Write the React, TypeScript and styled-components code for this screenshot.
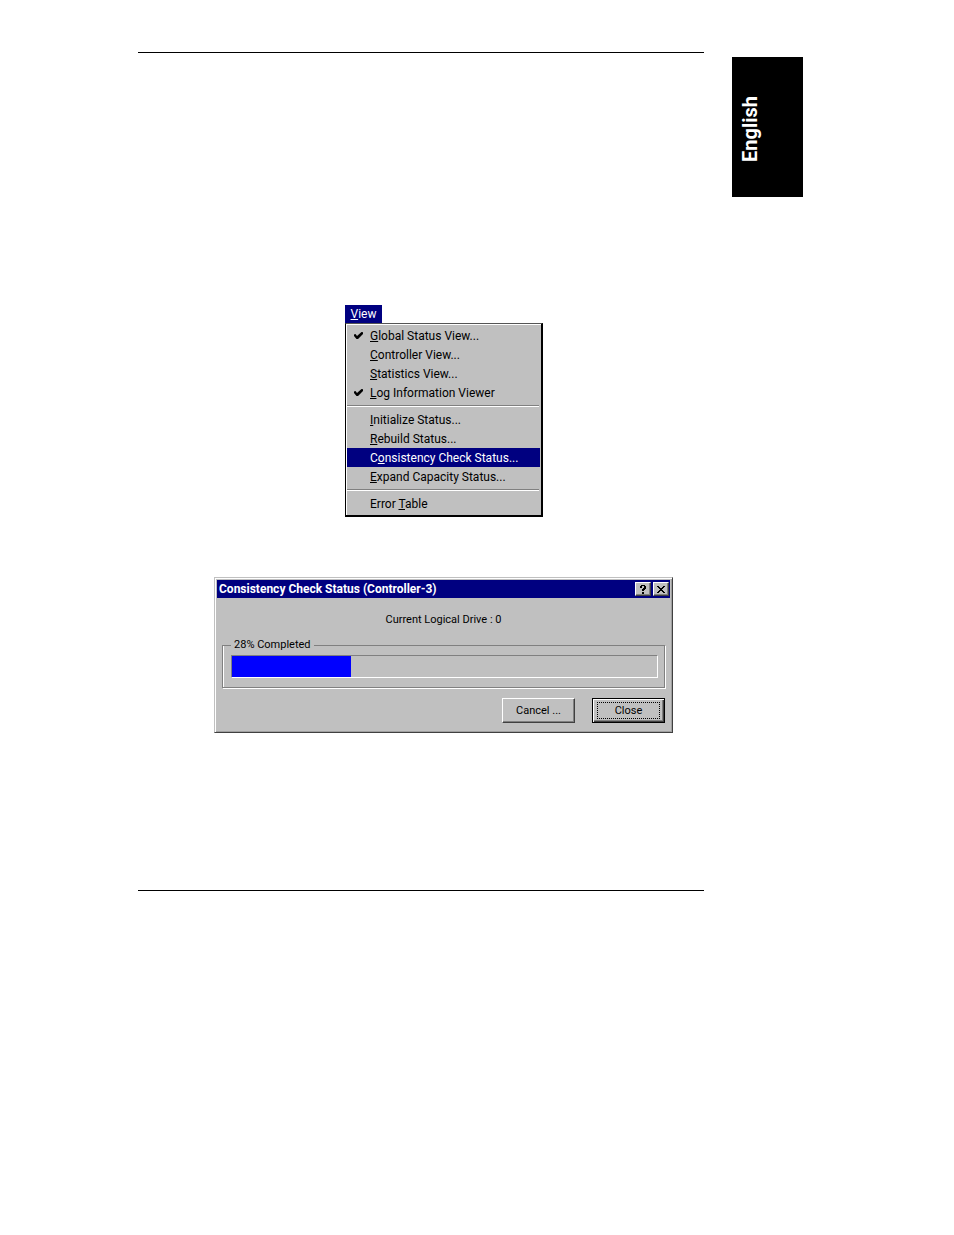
import React from "react";
import styled, { createGlobalStyle, css } from "styled-components";

const GlobalStyle = createGlobalStyle`
  *, *::before, *::after { box-sizing: border-box; }
  body { margin: 0; background: #fff; color: #000; font-family: Roboto, "Liberation Sans", Arial, sans-serif; }
  button, fieldset, legend { margin: 0; padding: 0; border: 0; font: inherit; color: inherit; }
  button { background: none; cursor: default; }
`;

const Page = styled.div`
  display: grid;
  grid-template-columns: minmax(0, 1fr) 71px;
  column-gap: 28px;
  align-items: start;
  padding: 52px 151px 64px 138px;
`;

const Sheet = styled.main`
  border-top: 1px solid #000;
  border-bottom: 1px solid #000;
  padding: 252px 0 157px 76px;
`;

const LanguageTab = styled.aside`
  display: flex;
  justify-content: center;
  align-items: flex-start;
  height: 140px;
  margin-top: 5px;
  padding: 0 6px 4px 0;
  background: #000;
  color: #fff;
  writing-mode: vertical-rl;
  transform: rotate(180deg);
  font: bold 20px/24px Roboto, "Liberation Sans", Arial, sans-serif;
`;

const MenuFigure = styled.section`
  display: flex;
  justify-content: center;
  padding-right: 30px;
`;

const DialogFigure = styled.section`
  padding: 60px 31px 0 0;
`;

const MenuBlock = styled.div`
  width: 198px;
  font-size: 12px;
  line-height: 18px;
`;

const MenuTitle = styled.button`
  display: block;
  width: 37px;
  height: 18px;
  background: #000080;
  color: #fff;
  font-size: 12px;
  text-align: center;
`;

const MenuPanel = styled.div`
  padding: 2px 1px 2px 0;
  border: solid #000;
  border-width: 1px 2px 2px 1px;
  border-top-color: #555;
  background: #c0c0c0;
  box-shadow: inset 1px 1px #fff;
`;

const MenuRow = styled.button<{ $active?: boolean }>`
  display: grid;
  grid-template-columns: 23px 1fr;
  align-items: center;
  width: calc(100% - 1px);
  height: 19px;
  margin-left: 1px;
  text-align: left;
  ${(p) => p.$active && css`background: #000080; color: #fff;`}
`;

const MenuRule = styled.hr`
  height: 2px;
  margin: 3px 1px;
  border: solid;
  border-width: 1px 0;
  border-color: #808080 transparent #fff;
`;

const Tick = styled.svg`
  justify-self: center;
`;

const Dialog = styled.div`
  padding: 2px;
  background: #c0c0c0;
  border: 1px solid;
  border-color: #c0c0c0 #404040 #404040 #c0c0c0;
  box-shadow: inset 1px 1px #fff, inset -1px -1px #a0a0a0;
  font-size: 11px;
  line-height: 14px;
`;

const TitleBar = styled.header`
  display: flex;
  align-items: center;
  gap: 2px;
  height: 18px;
  padding: 0 1px 0 2px;
  background: #000080;
  color: #fff;
`;

const DialogTitle = styled.h1`
  flex: 1;
  margin: 0;
  font-size: 12px;
  line-height: 18px;
  white-space: nowrap;
`;

const raised = css`
  border: 1px solid;
  border-color: #fff #404040 #404040 #fff;
  background: #c0c0c0;
  box-shadow: inset -1px -1px #808080;
`;

const CaptionButton = styled.button`
  ${raised}
  display: grid;
  place-items: center;
  width: 16px;
  height: 14px;
`;

const DialogBody = styled.div`
  padding: 15px 5px 7px;
`;

const Message = styled.p`
  margin: 0 0 11px;
  text-align: center;
`;

const Group = styled.fieldset`
  min-width: 0;
  border: 1px solid #808080;
  padding: 3px 6px 9px 8px;
  box-shadow: inset 1px 0 #fff, 1px 1px #fff;
`;

const GroupLegend = styled.legend`
  padding: 0 3px;
`;

const Track = styled.div`
  height: 23px;
  border: 1px solid;
  border-color: #808080 #fff #fff #808080;
`;

const Fill = styled.div`
  height: 100%;
  background: #0000ff;
`;

const Actions = styled.div`
  display: flex;
  justify-content: flex-end;
  gap: 17px;
  margin-top: 10px;
`;

const ActionButton = styled.button<{ $default?: boolean }>`
  ${raised}
  width: 73px;
  height: 25px;
  padding: 2px;
  ${(p) =>
    p.$default &&
    css`
      border-color: #000;
      box-shadow: inset 1px 1px #fff, inset -1px -1px #404040, inset -2px -2px #808080;
    `}
`;

const FocusRing = styled.span<{ $visible?: boolean }>`
  display: block;
  height: 17px;
  margin: 0 2px;
  line-height: 15px;
  border: 1px dotted ${(p) => (p.$visible ? "#000" : "transparent")};
`;

type Item = { before?: string; key: string; after: string; checked?: boolean; active?: boolean };

const groups: Item[][] = [
  [
    { key: "G", after: "lobal Status View...", checked: true },
    { key: "C", after: "ontroller View..." },
    { key: "S", after: "tatistics View..." },
    { key: "L", after: "og Information Viewer", checked: true },
  ],
  [
    { key: "I", after: "nitialize Status..." },
    { key: "R", after: "ebuild Status..." },
    { before: "C", key: "o", after: "nsistency Check Status...", active: true },
    { key: "E", after: "xpand Capacity Status..." },
  ],
  [{ before: "Error ", key: "T", after: "able" }],
];

function MenuItem({ item }: { item: Item }) {
  return (
    <MenuRow
      role={item.checked ? "menuitemcheckbox" : "menuitem"}
      aria-checked={item.checked}
      $active={item.active}
    >
      {item.checked ? (
        <Tick width="9" height="9" viewBox="0 0 9 9" aria-hidden="true">
          <path d="M0 3.5 1.5 3 3 5 7.5 1 9 1.2V3L4 8H2.5L0 5z" />
        </Tick>
      ) : (
        <span />
      )}
      <span>
        {item.before}
        <u>{item.key}</u>
        {item.after}
      </span>
    </MenuRow>
  );
}

export default function App() {
  const percent = 28;
  return (
    <>
      <GlobalStyle />
      <Page>
        <Sheet>
          <MenuFigure>
            <MenuBlock>
              <MenuTitle aria-haspopup="menu" aria-expanded="true">
                <u>V</u>iew
              </MenuTitle>
              <MenuPanel role="menu" aria-label="View">
                {groups.map((items, i) => (
                  <React.Fragment key={i}>
                    {i > 0 && <MenuRule />}
                    {items.map((item) => (
                      <MenuItem key={item.key} item={item} />
                    ))}
                  </React.Fragment>
                ))}
              </MenuPanel>
            </MenuBlock>
          </MenuFigure>
          <DialogFigure>
            <Dialog role="dialog" aria-labelledby="dialog-title">
              <TitleBar>
                <DialogTitle id="dialog-title">Consistency Check Status (Controller-3)</DialogTitle>
                <CaptionButton aria-label="Help">
                  <svg width="8" height="9" viewBox="0 0 8 9" aria-hidden="true">
                    <path d="M1 1h1V0h4v1h1v3H6v1H5v1H3V4h1V3h1V1H3v2H1zM3 7h2v2H3z" />
                  </svg>
                </CaptionButton>
                <CaptionButton aria-label="Close window">
                  <svg width="8" height="7" viewBox="0 0 8 7" aria-hidden="true">
                    <path d="M0 0h2v1h1v1h2V1h1V0h2v1H7v1H6v1H5v1h1v1h1v1h1v1H6V6H5V5H3v1H2v1H0V6h1V5h1V4h1V3H2V2H1V1H0z" />
                  </svg>
                </CaptionButton>
              </TitleBar>
              <DialogBody>
                <Message>Current Logical Drive : 0</Message>
                <Group>
                  <GroupLegend>{percent}% Completed</GroupLegend>
                  <Track
                    role="progressbar"
                    aria-label="Consistency check"
                    aria-valuenow={percent}
                    aria-valuemin={0}
                    aria-valuemax={100}
                  >
                    <Fill style={{ width: `${percent}%` }} />
                  </Track>
                </Group>
                <Actions>
                  <ActionButton>
                    <FocusRing>Cancel ...</FocusRing>
                  </ActionButton>
                  <ActionButton $default>
                    <FocusRing $visible>Close</FocusRing>
                  </ActionButton>
                </Actions>
              </DialogBody>
            </Dialog>
          </DialogFigure>
        </Sheet>
        <LanguageTab>English</LanguageTab>
      </Page>
    </>
  );
}
